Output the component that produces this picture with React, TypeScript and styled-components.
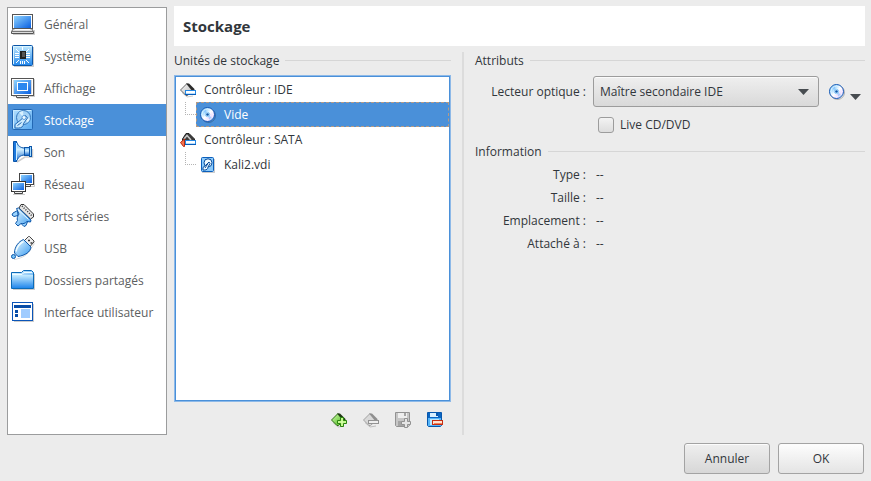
import React, { useState } from "react";
import styled, { createGlobalStyle } from "styled-components";

const GlobalStyle = createGlobalStyle`
  * { box-sizing: border-box; }
  body {
    margin: 0;
    background: #ececec;
    color: #31363b;
    font: 12px/16px "Open Sans", "Noto Sans", sans-serif;
  }
  button, select, input { font: inherit; color: inherit; margin: 0; }
`;

const Dialog = styled.form`
  display: flex;
  flex-direction: column;
  min-height: 100vh;
  padding: 6px 6px 7px 7px;
`;

const Body = styled.div`
  display: flex;
  flex: 1;
  gap: 7px;
`;

const Sidebar = styled.nav`
  flex: 0 0 160px;
  display: flex;
  flex-direction: column;
  margin-top: 1px;
  background: #fff;
  border: 1px solid #9b9c9d;
`;

const SidebarItem = styled.button<{ $active: boolean }>`
  display: flex;
  align-items: center;
  gap: 9px;
  height: 32px;
  padding: 0 3px;
  border: 0;
  text-align: left;
  white-space: nowrap;
  background: ${(p) => (p.$active ? "#4a90d9" : "transparent")};
  color: ${(p) => (p.$active ? "#fff" : "#5c6061")};
`;

const SidebarLabel = styled.span`
  padding-top: 2px;
`;

const Main = styled.main`
  flex: 1;
  min-width: 0;
  display: flex;
  flex-direction: column;
`;

const Title = styled.h1`
  margin: 0;
  padding: 10px 9px;
  background: #fff;
  font-size: 15px;
  line-height: 20px;
  font-weight: 700;
`;

const Columns = styled.div`
  display: flex;
  flex: 1;
  padding-top: 6px;
`;

const StorageColumn = styled.section`
  flex: 0 0 277px;
  display: flex;
  flex-direction: column;
`;

const Divider = styled.div`
  width: 2px;
  margin: 0 11px;
  background: #dcdcdc;
`;

const DetailsColumn = styled.section`
  flex: 1;
  min-width: 0;
`;

const Heading = styled.h2`
  display: flex;
  align-items: center;
  gap: 6px;
  margin: 0;
  font-size: 12px;
  line-height: 17px;
  font-weight: 400;
  white-space: nowrap;

  &::after {
    content: "";
    flex: 1;
    height: 1px;
    background: #d6d6d6;
  }
`;

const Tree = styled.ul`
  flex: 1;
  margin: 6px 0 0;
  padding: 1px 0 0 5px;
  list-style: none;
  background: #fff;
  border: 1px solid #8db9e8;
  box-shadow: inset 0 0 0 1px #4a90d9;
`;

const TreeRow = styled.div`
  display: flex;
  align-items: center;
  gap: 8px;
  height: 25px;
`;

const Children = styled.ul`
  margin: 0;
  padding: 0;
  list-style: none;
`;

const Leaf = styled.li`
  display: flex;
  height: 25px;
  padding-right: 1px;
`;

const Branch = styled.span`
  width: 11px;
  height: 13px;
  margin-left: 5px;
  border-left: 1px dotted #b4b4b4;
  border-bottom: 1px dotted #b4b4b4;
`;

const LeafContent = styled.div<{ $selected?: boolean }>`
  flex: 1;
  display: flex;
  align-items: center;
  gap: 8px;
  padding-left: 3px;
  border: 1px dashed ${(p) => (p.$selected ? "#b59a84" : "transparent")};
  background: ${(p) => (p.$selected ? "#4a90d9" : "transparent")};
  background-clip: border-box;
  color: ${(p) => (p.$selected ? "#fff" : "inherit")};
`;

const TreeTools = styled.div`
  display: flex;
  justify-content: flex-end;
  gap: 16px;
  padding: 10px 8px 7px 0;
`;

const IconButton = styled.button`
  display: flex;
  align-items: center;
  padding: 0;
  border: 0;
  background: none;
`;

const MediumButton = styled(IconButton)`
  gap: 5px;
  margin: 0 4px 0 10px;

  svg:last-child { margin-top: 11px; }
`;

const Fields = styled.div`
  display: grid;
  grid-template-columns: 111px 1fr;
  column-gap: 7px;
  row-gap: 10px;
  padding: 7px 0 10px;
  align-items: center;
`;

const FieldLabel = styled.label`
  text-align: right;
  white-space: nowrap;
`;

const DriveRow = styled.div`
  display: flex;
  align-items: center;
`;

const Combo = styled.div`
  flex: 1;
  display: grid;
  grid-template-columns: 1fr 21px;
  align-items: center;
  min-width: 0;

  select { grid-area: 1 / 1 / 2 / 3; }
  svg { grid-area: 1 / 2; pointer-events: none; }
`;

const Select = styled.select`
  appearance: none;
  width: 100%;
  height: 31px;
  padding: 0 28px 0 6px;
  border: 1px solid #9c9c9c;
  border-radius: 3px;
  background: linear-gradient(#efefef, #d9d9d9);
  box-shadow: inset 0 1px #fbfbfb;
`;

const LiveOption = styled.label`
  grid-column: 2;
  display: flex;
  align-items: center;
  gap: 6px;
  padding-left: 5px;
`;

const CheckBox = styled.input`
  appearance: none;
  width: 16px;
  height: 16px;
  border: 1px solid #9c9c9c;
  border-radius: 3px;
  background: linear-gradient(#f3f3f3, #dddddd);

  &:checked { background: #4a90d9; }
`;

const Info = styled.dl`
  display: grid;
  grid-template-columns: 111px 1fr;
  gap: 7px 10px;
  margin: 7px 0 0;

  dt { text-align: right; white-space: nowrap; }
  dd { margin: 0; }
`;

const Footer = styled.footer`
  display: flex;
  justify-content: flex-end;
  gap: 8px;
  padding: 8px 1px 0 0;
`;

const DialogButton = styled.button<{ $primary?: boolean }>`
  width: 86px;
  height: 31px;
  border: 1px solid #a3a3a3;
  border-radius: 3px;
  background: ${(p) =>
    p.$primary ? "linear-gradient(#fdfdfd, #e4e4e4)" : "linear-gradient(#efefef, #d7d7d7)"};
  box-shadow: inset 0 1px #fcfcfc;
`;

const Gradients = () => (
  <svg width="0" height="0" aria-hidden="true" display="block">
    <defs>
      <linearGradient id="screen" x1="0" y1="0" x2="1" y2="1">
        <stop offset="0" stopColor="#8fd4ff" />
        <stop offset="1" stopColor="#0a5fe0" />
      </linearGradient>
      <linearGradient id="sky" x1="0" y1="0" x2="0" y2="1">
        <stop offset="0" stopColor="#c6ecff" />
        <stop offset="1" stopColor="#2187ec" />
      </linearGradient>
      <linearGradient id="pane" x1="0" y1="0" x2="1" y2="1">
        <stop offset="0" stopColor="#b4e0fd" />
        <stop offset="1" stopColor="#58a9f0" />
      </linearGradient>
      <linearGradient id="cone" x1="0" y1="0" x2="0" y2="1">
        <stop offset="0" stopColor="#5aaef8" />
        <stop offset=".4" stopColor="#d2f0ff" />
        <stop offset="1" stopColor="#0d62cc" />
      </linearGradient>
      <linearGradient id="glass" x1="0" y1="0" x2="1" y2="1">
        <stop offset="0" stopColor="#e8f9ff" />
        <stop offset="1" stopColor="#3a9bf0" />
      </linearGradient>
      <linearGradient id="disc" x1="0" y1="0" x2="1" y2="1">
        <stop offset="0" stopColor="#b9fbff" />
        <stop offset=".3" stopColor="#a9dcff" />
        <stop offset=".5" stopColor="#fff" />
        <stop offset=".75" stopColor="#ead6ff" />
        <stop offset="1" stopColor="#c4fbe8" />
      </linearGradient>
      <linearGradient id="silver" x1="0" y1="0" x2="1" y2="1">
        <stop offset="0" stopColor="#fff" />
        <stop offset="1" stopColor="#b0b0b0" />
      </linearGradient>
      <linearGradient id="leaf" x1="0" y1="0" x2="1" y2="1">
        <stop offset="0" stopColor="#d4ffb0" />
        <stop offset="1" stopColor="#3eb010" />
      </linearGradient>
    </defs>
  </svg>
);

const Large = ({ children }: { children: React.ReactNode }) => (
  <svg width="24" height="24" viewBox="0 0 24 24" aria-hidden="true">{children}</svg>
);

const Small = ({ children }: { children: React.ReactNode }) => (
  <svg width="16" height="16" viewBox="0 0 16 16" aria-hidden="true">{children}</svg>
);

const GeneralIcon = () => (
  <Large>
    <path d="M2 22.500h21.500V18" fill="none" stroke="#000" opacity=".2" />
    <rect x="1.500" y="2.500" width="20" height="14" fill="#fff" stroke="#555" />
    <rect x="3" y="4" width="17" height="12" fill="url(#screen)" />
    <path d="M2.500 16.500h18l2 3v2h-22v-2z" fill="#ddd" stroke="#555" />
    <path d="M1 19.500h21" stroke="#777" />
    <path d="M4 17.500h15" stroke="#fff" />
  </Large>
);

const SystemIcon = () => (
  <Large>
    <path d="M3 22.500h19.500V3" fill="none" stroke="#000" opacity=".2" />
    <rect x="1.500" y="1.500" width="20" height="20" rx="1" fill="url(#sky)" stroke="#0b55a8" />
    <path d="M2.500 20V2.500h17.500" fill="none" stroke="#d8f4ff" />
    <path d="M4 9.500h4M4 11.500h4M4 13.500h4M15 9.500h4M15 11.500h4M15 13.500h4M11.500 3v3M13.500 17v3M9.500 17v3M11.500 17v3M5 5l3 3M18 5l-3 3M5 19l3-3M18 19l-3-3" stroke="#fff" />
    <rect x="9" y="7" width="6" height="8" fill="#222" />
    <path d="M11 8h3v5h-3z" fill="#555" />
  </Large>
);

const DisplayIcon = () => (
  <Large>
    <path d="M2 20.500h21.500V3M6 22.500h13" fill="none" stroke="#000" opacity=".2" />
    <rect x=".5" y="2.500" width="22" height="17" fill="#fff" stroke="#555" />
    <rect x="2" y="4" width="19" height="14" fill="#d6d6d6" />
    <rect x="3" y="4" width="17" height="14" fill="url(#screen)" />
    <rect x="6.500" y="6.500" width="10" height="8" fill="#2b87ef" stroke="#fff" />
    <path d="M5.500 19.500h12v2h-12z" fill="#eee" stroke="#555" />
  </Large>
);

const StorageIcon = () => (
  <Large>
    <rect x="1.500" y="1.500" width="20" height="20" rx="1" fill="url(#pane)" stroke="#2368b4" />
    <path d="M2.500 20V2.500h17.500" fill="none" stroke="#c8eaff" />
    <circle cx="12.500" cy="9.500" r="7" fill="#a3d2f6" stroke="#3377bd" />
    <path d="M12.500 9.500L8 4.500a7 7 0 0 1 4-1.500zM12.500 9.500l6.500 1a7 7 0 0 1-2.500 4z" fill="#e2f6ff" opacity=".85" />
    <path d="M14.500 7.500l2 2.500-4 5.500c0 3-2 4.500-5 4.500H4v-3.500l5-4z" fill="#c9e9fd" stroke="#2368b4" />
    <circle cx="13" cy="9.500" r="2" fill="#f2fbff" stroke="#5b9bd8" />
    <path d="M6.500 17.500l4-3" stroke="#2368b4" />
  </Large>
);

const AudioIcon = () => (
  <Large>
    <path d="M6 22l8-5h7.500V9" fill="none" stroke="#000" strokeWidth="1.500" opacity=".2" />
    <path d="M5.500 1.500c1 4 4 6.500 8 6.500v7c-4 0-7 3-8 6.500z" fill="url(#cone)" stroke="#0b55a8" />
    <path d="M2.500 1.500h3v20h-3z" fill="#1c78dd" stroke="#0b55a8" />
    <path d="M5.500 3v17" stroke="#cdeeff" />
    <rect x="13.500" y="7.500" width="5" height="8" fill="url(#cone)" stroke="#0b55a8" />
    <rect x="18.500" y="6.500" width="2" height="10" fill="#a5dcff" stroke="#0b55a8" />
  </Large>
);

const NetworkIcon = () => (
  <Large>
    <path d="M15 14.500h8.500V3M2 22.500h12" fill="none" stroke="#000" opacity=".2" />
    <rect x="8.500" y="1.500" width="14" height="11" fill="#fff" stroke="#444" />
    <rect x="10" y="3" width="11" height="8" fill="url(#screen)" />
    <path d="M12.500 12.500h7v2h-7z" fill="#eee" stroke="#444" />
    <rect x=".5" y="9.500" width="14" height="10" fill="#fff" stroke="#333" />
    <rect x="2" y="11" width="11" height="7" fill="url(#screen)" />
    <path d="M3.500 19.500h8v2h-8z" fill="#eee" stroke="#444" />
  </Large>
);

const SerialIcon = () => (
  <Large>
    <path d="M8 4l2-3.500h3L22.500 10v3l-3 2z" fill="#e6e6e6" stroke="#333" />
    <path d="M11 2l10 10" stroke="#333" strokeDasharray="1 1.500" strokeWidth="1.500" />
    <path d="M6.500 6.500L2 9l-1 2 2 1.500 4-1zM12 16.500l-1 4 2 2 2-1 2-5z" fill="#9bd5ff" stroke="#0b55a8" />
    <path d="M5.500 4.500l2-.5L20 16l-.5 2-3.500-.500c-2 2-4 2.500-6 2l-3 2.500-2.500-2.500L6.500 16.500c-.8-2 0-4 1.500-6.500z" fill="url(#glass)" stroke="#0b55a8" />
    <path d="M7.500 6l10 9.500" stroke="#e8faff" />
  </Large>
);

const UsbIcon = () => (
  <Large>
    <path d="M3 23.500c7-1 14-4 17-11l3.500-5" fill="none" stroke="#000" opacity=".15" />
    <path d="M13.500 4.500l4-4h1l4.500 4.500v1l-4 4.500z" fill="#eee" stroke="#444" />
    <path d="M17 4.500h2M19.500 7h2" stroke="#333" strokeWidth="1.500" />
    <path d="M12.500 3.500l7.500 7.500c-.5 5-6 8.500-13 9.500L3.500 17C3.500 11 7.500 5.500 12.500 3.500z" fill="url(#glass)" stroke="#0b55a8" />
    <path d="M12.500 5.500c-4 2-6.500 5.500-7.500 10" fill="none" stroke="#f0fcff" strokeWidth="1.500" />
    <circle cx="2.500" cy="20.500" r="2" fill="#79c6fa" stroke="#0b55a8" />
  </Large>
);

const FolderIcon = () => (
  <Large>
    <path d="M2 21.500h21.500V6" fill="none" stroke="#000" opacity=".2" />
    <path d="M.5 20.500v-16h10l2-2h8l2 2v16z" fill="url(#glass)" stroke="#0b6bb8" />
    <rect x="1" y="7" width="21" height="13" fill="url(#sky)" />
    <path d="M1 6.500h10l2-2h8" fill="none" stroke="#effcff" />
  </Large>
);

const InterfaceIcon = () => (
  <Large>
    <path d="M3 21.500h19.500V4" fill="none" stroke="#000" opacity=".2" />
    <rect x="1.500" y="2.500" width="20" height="18" fill="#fff" stroke="#0b55b8" />
    <path d="M3 5h17v3H3zM4 10h3v3H4zM4 14h3v3H4z" fill="#084da8" />
    <rect x="10" y="9" width="9" height="9" fill="#a0ccff" />
  </Large>
);

const Diamond = ({ fill, stroke, top }: { fill: string; stroke: string; top: string }) => (
  <>
    <path d="M2 10.500L7 15l6-1" fill="none" stroke="#000" opacity=".2" />
    <path d="M.5 8L7 1.500l6.500 6.500L7.500 13.500H6z" fill={fill} stroke={stroke} />
    <path d="M6 1.500h3l5.500 5.500v2l-2 .5z" fill={top} />
  </>
);

const Strip = () => (
  <>
    <rect x="5.500" y="8.500" width="10" height="4" fill="#fff" stroke="#2387e2" />
    <path d="M5 12.500h11" stroke="#075cba" />
    <path d="M6 11.500h9" stroke="#b7deff" />
  </>
);

const IdeIcon = () => (
  <Small>
    <Diamond fill="url(#silver)" stroke="#666" top="#2a2a2a" />
    <Strip />
  </Small>
);

const SataIcon = () => (
  <Small>
    <path d="M2.500 7L6 1.500h3l5.500 5.500v3h-12z" fill="#3b3b3b" stroke="#222" />
    <path d="M4 7l3-3.500L11 8" fill="none" stroke="#c9c9c9" strokeWidth="1.500" />
    <path d="M.5 10.500L4.500 7v7.500h-1z" fill="#f7734e" stroke="#b62b12" />
    <Strip />
  </Small>
);

const DiscIcon = () => (
  <Small>
    <circle cx="8.500" cy="8.500" r="7" fill="none" stroke="#000" opacity=".25" />
    <circle cx="7.500" cy="7.500" r="7" fill="url(#disc)" stroke="#1356b4" />
    <path d="M7.500 7.500L2.500 4l3-2.500zM7.500 7.500l5 3.500-3 2.500z" fill="#6fb6ff" opacity=".5" />
    <circle cx="7.500" cy="7.500" r="5.500" fill="none" stroke="#fff" opacity=".6" />
    <circle cx="7.500" cy="7.500" r="2.200" fill="#d8f3ff" stroke="#8ecbf8" />
    <circle cx="7.500" cy="7.500" r="1.300" fill="#0c55ac" />
  </Small>
);

const HardDiskIcon = () => (
  <Small>
    <path d="M2 15.500h12.500V2" fill="none" stroke="#000" opacity=".2" />
    <rect x="1.500" y=".5" width="12" height="14" rx="1" fill="#8bcafb" stroke="#0b5fbc" />
    <circle cx="8" cy="5.800" r="4" fill="#f0faff" stroke="#084b9a" />
    <path d="M9 5l1 1.500-2 3.500c0 2-1.500 3-3.500 3H3v-2.500L6 8z" fill="#f0faff" stroke="#084b9a" />
    <path d="M8 6.500L5 11" stroke="#084b9a" />
  </Small>
);

const AddControllerIcon = () => (
  <Small>
    <Diamond fill="url(#leaf)" stroke="#2f6e14" top="#1f3a14" />
    <path d="M9.500 5.500h3v3h3v3h-3v3h-3v-3h-3v-3h3z" fill="#a8f45e" stroke="#2b8510" />
    <path d="M11 6v8M7 10h8" stroke="#e1ffc0" />
  </Small>
);

const RemoveControllerIcon = () => (
  <Small>
    <Diamond fill="#d8d8d8" stroke="#a2a2a2" top="#8f8f8f" />
    <rect x="5.500" y="8.500" width="10" height="3" fill="#eee" stroke="#929292" />
  </Small>
);

const AddAttachmentIcon = () => (
  <Small>
    <path d="M.5.500h14v13l-1 1h-12l-1-1z" fill="#c6c6c6" stroke="#929292" />
    <path d="M3 1h9v5H3z" fill="#eee" />
    <path d="M9 1h2v3H9zM3 9h7v5H3z" fill="#a4a4a4" />
    <path d="M9.500 6.500h3v3h3v3h-3v3h-3v-3h-3v-3h3z" fill="#e5e5e5" stroke="#929292" />
  </Small>
);

const RemoveAttachmentIcon = () => (
  <Small>
    <path d="M.5.500h14v13l-1 1h-12l-1-1z" fill="#55b5f8" stroke="#0757ad" />
    <path d="M1 1h13v5H1z" fill="#0b65c2" />
    <path d="M3 1h8v4H3z" fill="#d9f0ff" />
    <path d="M9 1h2v3H9z" fill="#0757ad" />
    <path d="M3 7h9v6H3z" fill="#b9e7ff" />
    <rect x="5.500" y="8.500" width="10" height="4" fill="#ffe3d2" stroke="#c52e13" />
    <path d="M7 11.500h8" stroke="#f68058" />
  </Small>
);

const Arrow = () => (
  <svg width="11" height="6" viewBox="0 0 11 6" aria-hidden="true">
    <path d="M0 0h11L5.500 6z" fill="#474c50" />
  </svg>
);

const pages = [
  { name: "Général", Icon: GeneralIcon },
  { name: "Système", Icon: SystemIcon },
  { name: "Affichage", Icon: DisplayIcon },
  { name: "Stockage", Icon: StorageIcon },
  { name: "Son", Icon: AudioIcon },
  { name: "Réseau", Icon: NetworkIcon },
  { name: "Ports séries", Icon: SerialIcon },
  { name: "USB", Icon: UsbIcon },
  { name: "Dossiers partagés", Icon: FolderIcon },
  { name: "Interface utilisateur", Icon: InterfaceIcon },
];

const information = ["Type :", "Taille :", "Emplacement :", "Attaché à :"];

export default function App() {
  const [page, setPage] = useState("Stockage");

  return (
    <>
      <GlobalStyle />
      <Gradients />
      <Dialog onSubmit={(e) => e.preventDefault()}>
        <Body>
          <Sidebar>
            {pages.map(({ name, Icon }) => (
              <SidebarItem key={name} type="button" $active={name === page} onClick={() => setPage(name)}>
                <Icon />
                <SidebarLabel>{name}</SidebarLabel>
              </SidebarItem>
            ))}
          </Sidebar>
          <Main>
            <Title>{page}</Title>
            <Columns>
              <StorageColumn>
                <Heading>Unités de stockage</Heading>
                <Tree>
                  <li>
                    <TreeRow><IdeIcon />Contrôleur : IDE</TreeRow>
                    <Children>
                      <Leaf><Branch /><LeafContent $selected><DiscIcon />Vide</LeafContent></Leaf>
                    </Children>
                  </li>
                  <li>
                    <TreeRow><SataIcon />Contrôleur : SATA</TreeRow>
                    <Children>
                      <Leaf><Branch /><LeafContent><HardDiskIcon />Kali2.vdi</LeafContent></Leaf>
                    </Children>
                  </li>
                </Tree>
                <TreeTools>
                  <IconButton type="button" aria-label="Ajouter un contrôleur"><AddControllerIcon /></IconButton>
                  <IconButton type="button" aria-label="Supprimer le contrôleur" disabled><RemoveControllerIcon /></IconButton>
                  <IconButton type="button" aria-label="Ajouter une unité" disabled><AddAttachmentIcon /></IconButton>
                  <IconButton type="button" aria-label="Supprimer l'unité"><RemoveAttachmentIcon /></IconButton>
                </TreeTools>
              </StorageColumn>
              <Divider />
              <DetailsColumn>
                <Heading>Attributs</Heading>
                <Fields>
                  <FieldLabel htmlFor="drive">Lecteur optique :</FieldLabel>
                  <DriveRow>
                    <Combo>
                      <Select id="drive"><option>Maître secondaire IDE</option></Select>
                      <Arrow />
                    </Combo>
                    <MediumButton type="button" aria-label="Choisir un disque">
                      <DiscIcon />
                      <Arrow />
                    </MediumButton>
                  </DriveRow>
                  <LiveOption><CheckBox type="checkbox" />Live CD/DVD</LiveOption>
                </Fields>
                <Heading>Information</Heading>
                <Info>
                  {information.map((label) => (
                    <React.Fragment key={label}>
                      <dt>{label}</dt>
                      <dd>--</dd>
                    </React.Fragment>
                  ))}
                </Info>
              </DetailsColumn>
            </Columns>
          </Main>
        </Body>
        <Footer>
          <DialogButton type="button">Annuler</DialogButton>
          <DialogButton type="submit" $primary>OK</DialogButton>
        </Footer>
      </Dialog>
    </>
  );
}
